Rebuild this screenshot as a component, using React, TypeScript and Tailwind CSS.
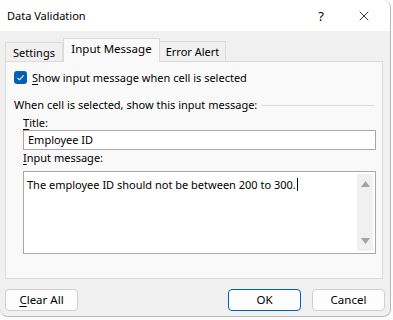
import { X } from 'lucide-react';

const font = { fontFamily: '"Noto Sans", "Segoe UI", sans-serif' };

function Btn({ label, primary, className }: { label: React.ReactNode; primary?: boolean; className?: string }) {
  return (
    <button
      className={
        'flex h-[22px] w-[73px] items-center justify-center rounded-[4px] border bg-[#fdfdfd] text-[11.5px] text-black ' +
        (primary ? 'border-[#005fb8] ' : 'border-[#d0d0d0] ') +
        (className ?? '')
      }
    >
      {label}
    </button>
  );
}

export default function App() {
  return (
    <div className="h-[320px] w-[393px] overflow-hidden bg-[#fbfbfb]" style={font}>
      <div className="flex h-[317px] w-[391px] flex-col overflow-hidden rounded-tr-[8px] rounded-b-[8px] border-r border-b border-[#b8b8b8] bg-[#f0f0f0] text-[11px] leading-[12px] text-black">
        {/* title bar */}
        <div className="flex h-[31px] shrink-0 items-center bg-white pl-[7px]">
          <span className="text-[11px]">Data Validation</span>
          <span className="ml-auto mr-[32px] text-[13px]">?</span>
          <X size={16} strokeWidth={1.2} className="mr-[18px] text-black" />
        </div>

        <div className="flex flex-1 flex-col px-[5px] pt-[7px]">
          {/* tabs */}
          <div className="flex h-[23px] items-end">
            <div className="flex h-[19px] w-[58px] items-center justify-center border border-b-0 border-[#dcdcdc] bg-[#f0f0f0] pt-px">
              Settings
            </div>
            <div className="relative z-10 -mb-px flex h-[24px] w-[97px] items-center justify-center border border-b-0 border-[#dcdcdc] bg-[#f9f9f9] pb-[3px] text-[11.5px]">
              Input Message
            </div>
            <div className="flex h-[20px] w-[66px] items-center justify-center border border-b-0 border-l-0 border-[#dcdcdc] bg-[#f0f0f0] pt-px">
              Error Alert
            </div>
          </div>

          {/* panel */}
          <div className="flex h-[218px] w-[378px] flex-col border border-[#dcdcdc] bg-[#f9f9f9] pl-[8px] pr-[6px] pt-[9px]">
            <div className="flex h-[13px] items-center gap-[5px]">
              <div className="flex h-[13px] w-[13px] items-center justify-center rounded-[3px] bg-[#005fb8]">
                <svg width="9" height="9" viewBox="0 0 9 9">
                  <path d="M1.5 4.8 L3.6 6.8 L7.6 2.4" fill="none" stroke="white" strokeWidth="1.1" />
                </svg>
              </div>
              <span>
                <u className="underline-offset-2">S</u>how input message when cell is selected
              </span>
            </div>

            <div className="mt-[15px] flex items-center gap-[4px]">
              <span className="whitespace-nowrap">When cell is selected, show this input message:</span>
              <div className="mr-px h-px flex-1 bg-[#dcdcdc]" />
            </div>

            <div className="ml-[9px] mt-[6px]">
              <u className="underline-offset-2">T</u>itle:
            </div>
            <div className="ml-[9px] mt-px flex h-[20px] w-[353px] items-center border border-[#a8a8a8] bg-white pl-[4px]">
              Employee ID
            </div>

            <div className="ml-[9px] mt-[2px]">
              <u className="underline-offset-2">I</u>nput message:
            </div>
            <div className="ml-[9px] mt-[7px] flex h-[83px] w-[353px] border border-[#a8a8a8] bg-white">
              <div className="flex-1 pl-[3px] pt-[4px]">
                The employee ID should not be between 200 to 300.
                <span className="ml-px inline-block h-[13px] w-px translate-y-[2px] bg-black align-baseline" />
              </div>
              <div className="my-[2px] mr-[2px] flex w-[16px] flex-col items-center justify-between bg-[#f0f0f0] py-[7px]">
                <svg width="9" height="6" viewBox="0 0 9 6">
                  <path d="M0 6 L4.5 0 L9 6 Z" fill="#a3a3a3" />
                </svg>
                <svg width="9" height="6" viewBox="0 0 9 6">
                  <path d="M0 0 L4.5 6 L9 0 Z" fill="#a3a3a3" />
                </svg>
              </div>
            </div>
          </div>

          {/* buttons */}
          <div className="mt-[10px] flex">
            <Btn
              label={
                <span>
                  <u className="underline-offset-2">C</u>lear All
                </span>
              }
            />
            <Btn label="OK" primary className="ml-auto" />
            <Btn label="Cancel" className="ml-[11px]" />
          </div>
        </div>
      </div>
    </div>
  );
}
